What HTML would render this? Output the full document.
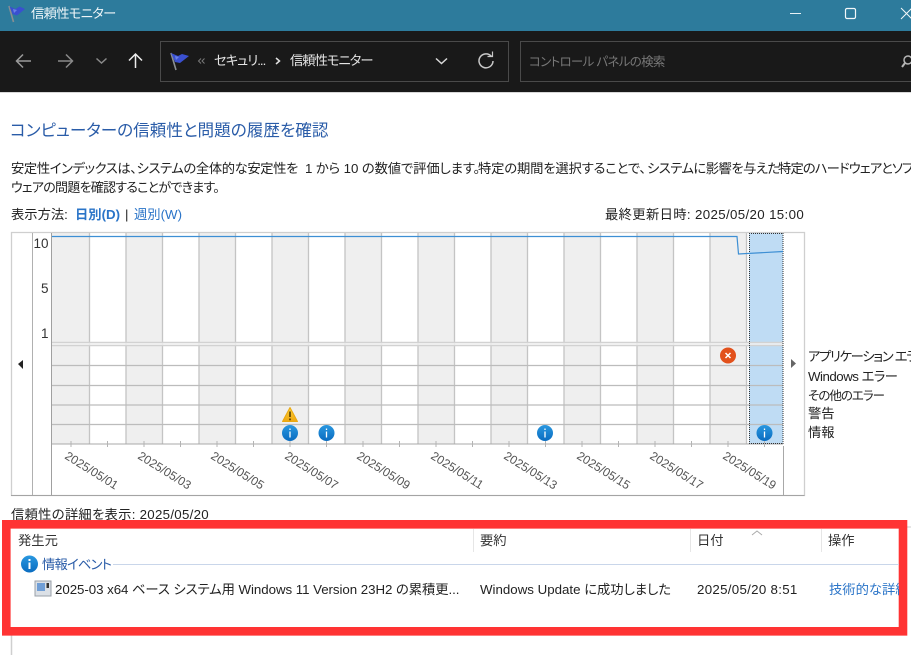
<!DOCTYPE html>
<html lang="ja"><head><meta charset="utf-8"><style>
html,body{margin:0;padding:0;width:911px;height:655px;overflow:hidden;background:#fff}
body{position:relative;font-family:"Liberation Sans","Noto Sans CJK JP",sans-serif;font-size:13.3px;color:#222;font-feature-settings:"palt"}
.t{position:absolute;white-space:nowrap;line-height:18px;height:18px}
.b{position:absolute}
a{color:#2a74c8;text-decoration:none}
svg{position:absolute;left:0;top:0}
svg text{font-family:"Liberation Sans","Noto Sans CJK JP",sans-serif}
</style></head><body>
<div class="b" style="left:0;top:0;width:911px;height:31px;background:#2d7b9c"></div>
<div class="b" style="left:0;top:31px;width:911px;height:61px;background:#191919"></div>
<div class="b" style="left:0;top:92px;width:911px;height:1px;background:#d8d8d8"></div>
<div class="b" style="left:160px;top:41px;width:347px;height:39px;border:1px solid #4a4a4a"></div>
<div class="b" style="left:520px;top:41px;width:400px;height:39px;border:1px solid #4a4a4a"></div>

<div class="t" style="left:31px;top:5px;color:#eef5f8;letter-spacing:-.7px">信頼性モニター</div>
<div class="t" style="left:214px;top:52px;color:#e4e4e4;letter-spacing:-1px">セキュリ...</div>
<div class="t" style="left:290px;top:52px;color:#e4e4e4;letter-spacing:-1px">信頼性モニター</div>
<div class="t" style="left:529px;top:53px;color:#777;font-size:12.5px;letter-spacing:-.7px">コントロール パネルの検索</div>

<div class="t" style="left:10px;top:120px;color:#2a5ca8;font-size:16.6px;line-height:22px;height:22px">コンピューターの信頼性と問題の履歴を確認</div>
<div class="t" style="left:11px;top:160px;letter-spacing:-.38px">安定性インデックスは、システムの全体的な安定性を</div>
<div class="t" style="left:305px;top:160px;letter-spacing:-.1px">1 から 10 の数値で評価します。</div>
<div class="t" style="left:478px;top:160px;letter-spacing:-.15px">特定の期間を選択することで、</div>
<div class="t" style="left:647px;top:160px;letter-spacing:-.5px">システムに影響を与えた</div>
<div class="t" style="left:778px;top:160px;width:133px;overflow:hidden;letter-spacing:-.85px">特定のハードウェアとソフト</div>
<div class="t" style="left:11px;top:179px;font-size:13px;letter-spacing:-.75px">ウェアの問題を確認することができます。</div>
<div class="t" style="left:11px;top:206px">表示方法:</div>
<div class="t" style="left:75px;top:206px"><a style="font-weight:bold">日別(D)</a></div>
<div class="t" style="left:125px;top:206px">|</div>
<div class="t" style="left:134px;top:206px"><a>週別(W)</a></div>
<div class="t" style="left:605px;top:206px;letter-spacing:.35px">最終更新日時: 2025/05/20 15:00</div>
<div class="t" style="left:11px;top:506px;letter-spacing:.28px">信頼性の詳細を表示: 2025/05/20</div>

<div class="t" style="left:808px;top:348px;width:103px;overflow:hidden;letter-spacing:-1.3px">アプリケーション エラー</div>
<div class="t" style="left:808px;top:368px;letter-spacing:-.5px">Windows エラー</div>
<div class="t" style="left:808px;top:387px;font-size:12.5px;letter-spacing:-1px">その他のエラー</div>
<div class="t" style="left:808px;top:405px">警告</div>
<div class="t" style="left:808px;top:424px">情報</div>

<svg width="911" height="655" viewBox="0 0 911 655">
 <!-- titlebar icons -->
 <path d="M9 6l4.500 16" stroke="#8a8f92" stroke-width="1.600" fill="none"/>
 <path d="M9.500 6.500l6 2.500 4-2.500 5.500 2.500-8 6.500-4.500-1.500z" fill="#3a50d0"/>
 <path d="M13 9l4 1-3 3z" fill="#6a82e8"/>
 <path d="M790 13.500h11" stroke="#e8f1f5" stroke-width="1"/>
 <rect x="845.500" y="8.500" width="10" height="10" rx="1.500" fill="none" stroke="#f2f7f9" stroke-width="1.200"/>
 <path d="M901 8l11 11M912 8l-11 11" stroke="#f2f7f9" stroke-width="1"/>
 <!-- nav icons -->
 <g fill="none" stroke-width="1.500">
  <path d="M31 61H17M23 54.500L16.500 61l6.500 6.500" stroke="#9a9a9a"/>
  <path d="M58 61h14M66 54.500l6.500 6.500-6.500 6.500" stroke="#8a8a8a"/>
  <path d="M96.500 58.500l5 4.500 5-4.500" stroke="#8a8a8a"/>
  <path d="M135.500 68V54M129 60.500l6.500-6.500 6.500 6.500" stroke="#ededed"/>
  <path d="M436 58.500l5.500 5 5.500-5" stroke="#d8d8d8"/>
  <path d="M491.500 56.500a7 7 0 1 0 1.500 4.500" stroke="#c8c8c8"/>
  <path d="M487.500 56.500h5v-5" stroke="#c8c8c8" stroke-width="1.200"/>
  <path d="M276 58l3.500 3-3.500 3" stroke="#e0e0e0"/>
  <path d="M201 58.500l-2.500 2.500 2.500 2.500M204.500 58.500l-2.500 2.500 2.500 2.500" stroke="#7a7a7a" stroke-width="1"/>
  <circle cx="908" cy="60" r="4" stroke="#b5b5b5"/>
  <path d="M905 63l-3 4" stroke="#b5b5b5" stroke-width="2"/>
 </g>
 <g transform="translate(162,47)">
  <path d="M9 6l5 17" stroke="#8a8f92" stroke-width="1.600" fill="none"/>
  <path d="M9 6l7 3 4-2 7 2-9 7-5-1z" fill="#3a50d0"/>
  <path d="M13 9l4 1-3 3z" fill="#6a82e8"/>
 </g>

 <!-- chart columns -->
 <g fill="#efefef">
  <rect x="52" y="233" width="37" height="211"/><rect x="125.500" y="233" width="36.500" height="211"/>
  <rect x="198.500" y="233" width="36.500" height="211"/><rect x="271.500" y="233" width="36.500" height="211"/>
  <rect x="344.500" y="233" width="36.500" height="211"/><rect x="417.500" y="233" width="36.500" height="211"/>
  <rect x="490.500" y="233" width="36.500" height="211"/><rect x="563.500" y="233" width="36.500" height="211"/>
  <rect x="636.500" y="233" width="36.500" height="211"/><rect x="709.500" y="233" width="36.500" height="211"/>
 </g>
 <rect x="749" y="233" width="34" height="211" fill="#bfdcf4"/>
 <!-- vertical lines -->
 <g stroke="#c4c4c4" stroke-width="1.300" fill="none">
  <path d="M89.500 233V444M126 233V444M162.500 233V444M199 233V444M235.500 233V444M272 233V444M308.500 233V444M345 233V444M381.500 233V444M418 233V444M454.500 233V444M491 233V444M527.500 233V444M564 233V444M600.500 233V444M637 233V444M673.500 233V444M710 233V444M746.500 233V444"/>
 </g>
 <!-- horizontal lines -->
 <g stroke="#c0c0c0" fill="none">
  <path d="M52 342.500H783M52 345.500H783" stroke="#d2d2d2" stroke-width="1.500"/>
  <path d="M52 344H783" stroke="#f2f2f2" stroke-width="1.500"/>
  <path d="M52 365.500H783M52 385.500H783M52 405H783M52 424.500H783" stroke="#bcbcbc" stroke-width="1.200"/>
  <path d="M52 444H783" stroke="#a8a8a8" stroke-width="1"/>
 </g>
 <!-- frame -->
 <g fill="none">
  <path d="M11.500 232.500H804.500V495.500H11.500Z" stroke="#cfcfcf" stroke-width="1.300"/>
  <path d="M11 495.500H804.500" stroke="#a4a4a4"/>
  <path d="M32.500 233V495" stroke="#b0b0b0"/>
  <path d="M51.500 233V495" stroke="#a0a0a0"/>
  <path d="M783.500 446V495" stroke="#a8a8a8"/>
  <path d="M749.500 233V444M783 233V444M749 233.500H783M749 443.500H783" stroke="#333" stroke-width="1" stroke-dasharray="1 1"/>
 </g>
 <!-- line graph -->
 <path d="M52 236.500H737L738.500 254L783 251.500" fill="none" stroke="#3d8fd4" stroke-width="1.200"/>
 <!-- axis numbers -->
 <g font-size="13.500" fill="#333" text-anchor="end">
  <text x="48.500" y="248">10</text><text x="48.500" y="293">5</text><text x="48.500" y="338">1</text>
 </g>
 <!-- arrows -->
 <path d="M18 364l5-4v9z" fill="#222"/>
 <path d="M791 359l5 4.500-5 4.500z" fill="#666"/>
 <!-- ticks -->
 <path d="M71 441v6M107.500 441v6M144 441v6M180.500 441v6M217 441v6M253.500 441v6M290 441v6M326.500 441v6M363 441v6M399.500 441v6M436 441v6M472.500 441v6M509 441v6M545.500 441v6M582 441v6M618.500 441v6M655 441v6M691.500 441v6M728 441v6M764.500 441v6" stroke="#b4b4b4" fill="none"/>
 <!-- date labels -->
 <g font-size="12" fill="#555">
  <text transform="translate(64,458) rotate(32)">2025/05/01</text>
  <text transform="translate(137,458) rotate(32)">2025/05/03</text>
  <text transform="translate(210,458) rotate(32)">2025/05/05</text>
  <text transform="translate(284,458) rotate(32)">2025/05/07</text>
  <text transform="translate(356,458) rotate(32)">2025/05/09</text>
  <text transform="translate(430,458) rotate(32)">2025/05/11</text>
  <text transform="translate(503,458) rotate(32)">2025/05/13</text>
  <text transform="translate(576,458) rotate(32)">2025/05/15</text>
  <text transform="translate(649,458) rotate(32)">2025/05/17</text>
  <text transform="translate(722,458) rotate(32)">2025/05/19</text>
 </g>
 <!-- chart icons -->
 <defs>
  <linearGradient id="bl" x1="0" y1="0" x2="0" y2="1"><stop offset="0" stop-color="#2a98e0"/><stop offset="1" stop-color="#0a6cc0"/></linearGradient>
  <linearGradient id="ye" x1="0" y1="0" x2="0" y2="1"><stop offset="0" stop-color="#fad23c"/><stop offset="1" stop-color="#f0a810"/></linearGradient>
 </defs>
 <g>
  <g transform="translate(290,433)"><circle r="8" fill="url(#bl)"/><path d="M0-4.500v1.500M0-1.500V4.500" stroke="#fff" stroke-width="1.300"/></g>
  <g transform="translate(326.500,433)"><circle r="8" fill="url(#bl)"/><path d="M0-4.500v1.500M0-1.500V4.500" stroke="#fff" stroke-width="1.300"/></g>
  <g transform="translate(545,433)"><circle r="8" fill="url(#bl)"/><path d="M0-4.500v1.500M0-1.500V4.500" stroke="#fff" stroke-width="1.300"/></g>
  <g transform="translate(764.500,433)"><circle r="8" fill="url(#bl)"/><path d="M0-4.500v1.500M0-1.500V4.500" stroke="#fff" stroke-width="1.300"/></g>
 </g>
 <path d="M290 407.500l7.500 14h-15z" fill="url(#ye)" stroke="#eaa810" stroke-width="1" stroke-linejoin="round"/>
 <path d="M290 411.500v5.500M290 418.500v1.800" stroke="#4a3400" stroke-width="1.500"/>
 <circle cx="728" cy="355.500" r="8" fill="#e2511c"/>
 <path d="M725.500 353l5 5M730.500 353l-5 5" stroke="#fff" stroke-width="1.500"/>

 <!-- lower panel border -->
 <path d="M11.500 628V655" stroke="#cfcfcf" stroke-width="1.500"/>
 <path d="M907 527H911" stroke="#ccc"/>
 <!-- red box -->
 <path d="M6.300 524.300H903V631.300H6.300Z" fill="none" stroke="#ff3333" stroke-width="8.600"/>
 <!-- table -->
 <path d="M473.500 529V552M690.500 529V552M821.500 529V552" stroke="#e6e6e6"/>
 <path d="M113 564.500H899" stroke="#c9d6ea"/>
 <path d="M752 535l5-4 5 4" fill="none" stroke="#aaa"/>
 <g transform="translate(29.500,564)"><circle r="8.500" fill="url(#bl)"/><path d="M0-5v2M0-1.500V5" stroke="#fff" stroke-width="2"/></g>
 <rect x="35" y="581" width="16" height="15" fill="#dbe0e6" stroke="#9aa0a8"/>
 <rect x="37" y="583" width="8" height="8" fill="#6f9ed6"/>
 <rect x="46.500" y="583" width="2.500" height="5" fill="#333"/>
</svg>

<div class="t" style="left:18px;top:532px;color:#333">発生元</div>
<div class="t" style="left:480px;top:532px;color:#333">要約</div>
<div class="t" style="left:697px;top:532px;color:#333">日付</div>
<div class="t" style="left:828px;top:532px;color:#333">操作</div>
<div class="t" style="left:42px;top:556px;color:#2a5ca8;letter-spacing:-.8px">情報イベント</div>
<div class="t" style="left:55px;top:581px;color:#222;letter-spacing:-.05px">2025-03 x64 ベース システム用 Windows 11 Version 23H2 の累積更...</div>
<div class="t" style="left:480px;top:581px;color:#222">Windows Update に成功しました</div>
<div class="t" style="left:697px;top:581px;color:#222;letter-spacing:.3px">2025/05/20 8:51</div>
<div class="t" style="left:829px;top:581px;width:70px;overflow:hidden;color:#2a74c8">技術的な詳細の表示</div>
</body></html>
